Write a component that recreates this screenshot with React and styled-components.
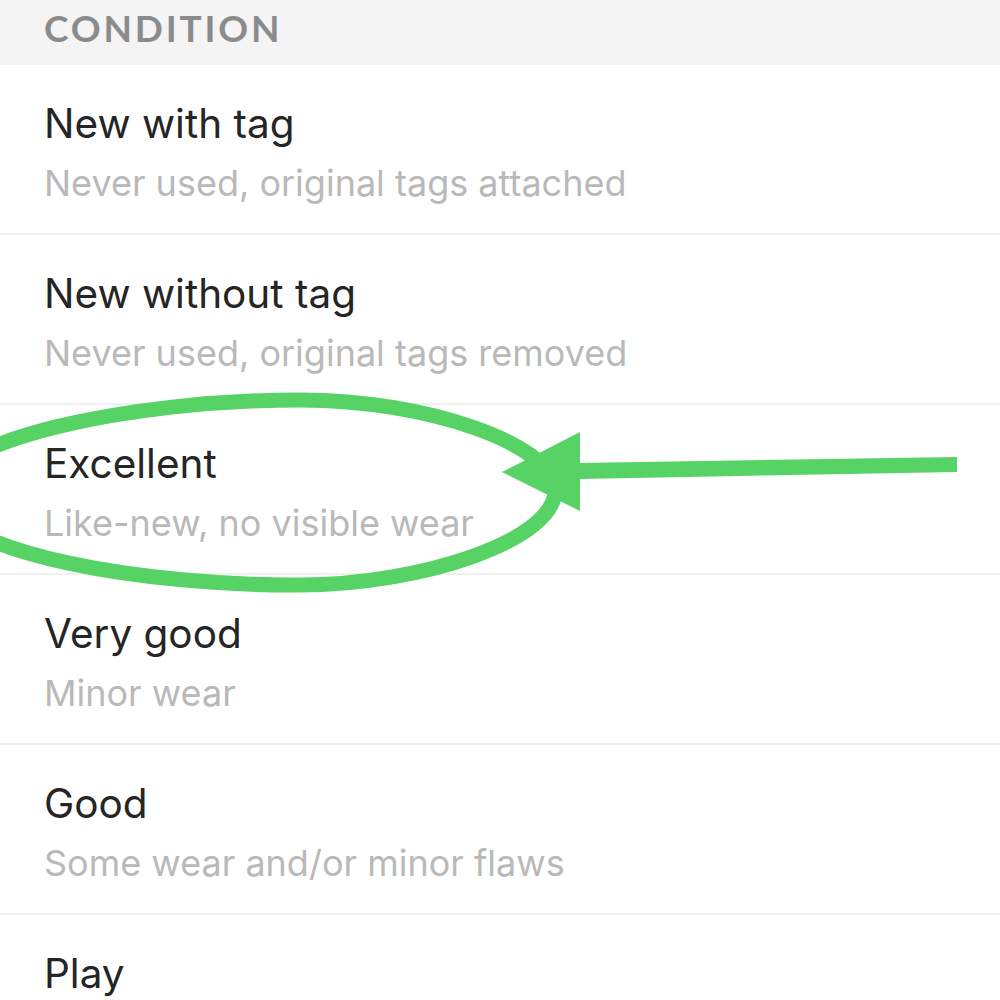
import React from "react";
import styled, { createGlobalStyle } from "styled-components";

const Global = createGlobalStyle`
  html, body { margin: 0; padding: 0; background: #ffffff; }
  body { width: 1000px; height: 1000px; overflow: hidden; }
`;

const Page = styled.div`
  position: relative;
  width: 1000px;
  height: 1000px;
  overflow: hidden;
  background: #ffffff;
  font-family: Inter, "Liberation Sans", Arial, sans-serif;
`;

const SectionHeader = styled.div`
  height: 65px;
  box-sizing: border-box;
  background: #f4f4f4;
  padding: 6px 0 0 44px;
`;

const HeaderLabel = styled.h2`
  margin: 0;
  font-family: Lato, "Liberation Sans", sans-serif;
  font-weight: 700;
  font-size: 37px;
  line-height: 44px;
  letter-spacing: 2.8px;
  color: #8b8b8b;
`;

const List = styled.div`
  display: flex;
  flex-direction: column;
`;

const Row = styled.div`
  height: 170px;
  box-sizing: border-box;
  padding: 34px 0 0 44px;
  border-bottom: 2px solid #f0f0f0;
`;

const Title = styled.div`
  font-size: 40.5px;
  line-height: 50px;
  color: #252525;
`;

const Subtitle = styled.div`
  margin-top: 11px;
  font-size: 36px;
  line-height: 46px;
  color: #b9b9b9;
`;

const Annotation = styled.svg`
  position: absolute;
  left: 0;
  top: 0;
  width: 1000px;
  height: 1000px;
  pointer-events: none;
`;

const items = [
  { title: "New with tag", sub: "Never used, original tags attached" },
  { title: "New without tag", sub: "Never used, original tags removed" },
  { title: "Excellent", sub: "Like-new, no visible wear" },
  { title: "Very good", sub: "Minor wear" },
  { title: "Good", sub: "Some wear and/or minor flaws" },
  { title: "Play", sub: "" },
];

export default function App() {
  return (
    <Page>
      <Global />
      <SectionHeader>
        <HeaderLabel>CONDITION</HeaderLabel>
      </SectionHeader>
      <List>
        {items.map((it) => (
          <Row key={it.title}>
            <Title>{it.title}</Title>
            {it.sub && <Subtitle>{it.sub}</Subtitle>}
          </Row>
        ))}
      </List>
      <Annotation viewBox="0 0 1000 1000">
        <path
          d="M 300 400 C 430 400 550 445 555 487 C 560 540 420 585 300 585 C 150 586 -50 555 -60 495 C -60 440 130 400 300 400 Z"
          fill="none"
          stroke="#56d364"
          strokeWidth="15"
        />
        <path d="M 580 463 L 957 457 L 957 472 L 580 479 Z" fill="#56d364" />
        <path d="M 502 472 L 580 432 L 580 511 Z" fill="#56d364" />
      </Annotation>
    </Page>
  );
}
